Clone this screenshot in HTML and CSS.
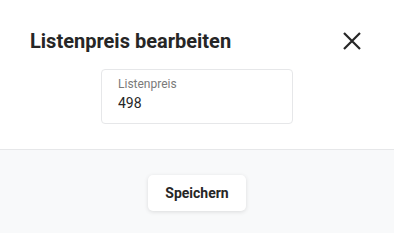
FILE: index.html
```html
<!DOCTYPE html>
<html lang="de">
<head>
    <meta charset="UTF-8">
    <meta name="viewport" content="width=device-width, initial-scale=1.0">
    <title>Listenpreis bearbeiten</title>
    <link rel="stylesheet" href="styles.css">
</head>
<body>
    <div class="dialog">
        <header class="dialog-head">
            <h2>Listenpreis bearbeiten</h2>
            <button class="close" aria-label="Schließen">
                <svg width="20" height="20" viewBox="0 0 20 20">
                    <path d="M2 2 L18 18 M18 2 L2 18" stroke="#262626" stroke-width="2.2" fill="none"/>
                </svg>
            </button>
        </header>
        <main class="dialog-body">
            <label class="field">
                <span class="field-label">Listenpreis</span>
                <input class="field-input" type="text" value="498">
            </label>
        </main>
        <footer class="dialog-foot">
            <button class="save-btn">Speichern</button>
        </footer>
    </div>
</body>
</html>
```

FILE: styles.css
```css
*{
    margin: 0;
    padding: 0;
    box-sizing: border-box;
}
body{
    font-family: Roboto, "Liberation Sans", sans-serif;
    background-color: #fff;
    color: #262626;
}
.dialog{
    background-color: #fff;
}
.dialog-head{
    display: flex;
    justify-content: space-between;
    align-items: center;
    padding: 28px 32px 0 30px;
}
.dialog-head h2{
    font-size: 20px;
    line-height: 26px;
    font-weight: 700;
    color: #262626;
}
.close{
    background: none;
    border: none;
    width: 20px;
    height: 20px;
    display: flex;
    cursor: pointer;
}
.dialog-body{
    display: flex;
    justify-content: center;
    padding: 15px 0 25px;
    border-bottom: 1px solid #e6e7e9;
}
.field{
    width: 192px;
    border: 1px solid #e6e7e9;
    border-radius: 4px;
    padding: 6px 16px 10px;
    display: flex;
    flex-direction: column;
    gap: 1px;
}
.field-label{
    font-size: 12px;
    line-height: 16px;
    color: #7a7a7a;
}
.field-input{
    border: none;
    outline: none;
    font-family: inherit;
    font-size: 14px;
    line-height: 20px;
    height: 20px;
    color: #262626;
    width: 100%;
}
.dialog-foot{
    background-color: #f8f9fa;
    display: flex;
    justify-content: center;
    padding: 25px 0 30px;
}
.save-btn{
    background-color: #fff;
    border: none;
    border-radius: 5px;
    height: 36px;
    padding: 0 17px;
    font-family: inherit;
    font-size: 14px;
    font-weight: 700;
    color: #262626;
    box-shadow: 0 1px 4px rgba(0, 0, 0, 0.12);
    cursor: pointer;
}
```
